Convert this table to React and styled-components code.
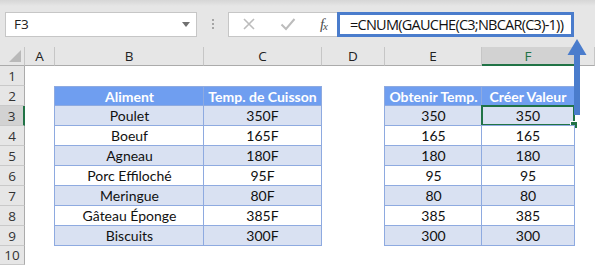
import React from 'react';
import styled, { createGlobalStyle } from 'styled-components';

const GlobalStyle = createGlobalStyle`
  html, body {
    margin: 0;
    padding: 0;
    background: #ffffff;
  }
  body {
    width: 595px;
    height: 265px;
    overflow: hidden;
  }
`;

const columns = [
  { key: 'A', width: 30 },
  { key: 'B', width: 149 },
  { key: 'C', width: 118 },
  { key: 'D', width: 63 },
  { key: 'E', width: 97 },
  { key: 'F', width: 93 },
  { key: 'G', width: 20 },
];

const foods = [
  ['Poulet', '350F', '350'],
  ['Boeuf', '165F', '165'],
  ['Agneau', '180F', '180'],
  ['Porc Effiloché', '95F', '95'],
  ['Meringue', '80F', '80'],
  ['Gâteau Éponge', '385F', '385'],
  ['Biscuits', '300F', '300'],
];

const App = () => {
  const rows = [];

  // row 1 is empty
  rows.push({ n: 1, cells: {} });
  rows.push({
    n: 2,
    cells: {
      B: { text: 'Aliment', kind: 'head', first: true },
      C: { text: 'Temp. de Cuisson', kind: 'head', last: true },
      E: { text: 'Obtenir Temp.', kind: 'head', first: true },
      F: { text: 'Créer Valeur', kind: 'head', last: true },
    },
  });
  foods.forEach(([name, temp, value], i) => {
    const kind = i % 2 === 0 ? 'band' : 'plain';
    rows.push({
      n: i + 3,
      cells: {
        B: { text: name, kind, first: true },
        C: { text: temp, kind, last: true },
        E: { text: value, kind, first: true },
        F: { text: value, kind, last: true, selected: i === 0 },
      },
    });
  });
  rows.push({ n: 10, cells: {} });

  return (
    <>
      <GlobalStyle />
      <Window>
        <Toolbar>
          <NameBox>
            <span>F3</span>
            <DropArrow />
          </NameBox>
          <Grip>
            <i /><i /><i />
          </Grip>
          <FormulaButtons>
            <svg width="14" height="14" viewBox="0 0 14 14">
              <path d="M2 2 L12 12 M12 2 L2 12" stroke="#bcbcbc" strokeWidth="1.6" fill="none" />
            </svg>
            <svg width="16" height="14" viewBox="0 0 16 14">
              <path d="M1.5 7.5 L6 12 L14.5 2" stroke="#bcbcbc" strokeWidth="2" fill="none" />
            </svg>
            <Fx>
              f<sub>x</sub>
            </Fx>
          </FormulaButtons>
          <FormulaInput>=CNUM(GAUCHE(C3;NBCAR(C3)-1))</FormulaInput>
        </Toolbar>

        <Sheet>
          <Corner />
          {columns.map(col => (
            <ColHeader key={col.key} active={col.key === 'F'}>
              {col.key === 'G' ? '' : col.key}
            </ColHeader>
          ))}

          {rows.map(row => (
            <React.Fragment key={row.n}>
              <RowHeader active={row.n === 3}>{row.n}</RowHeader>
              {columns.map(col => {
                const cell = row.cells[col.key];
                if (!cell) return <Blank key={col.key} />;
                return (
                  <Cell
                    key={col.key}
                    kind={cell.kind}
                    first={cell.first}
                    last={cell.last}
                    top={row.n === 2}
                  >
                    {cell.text}
                    {cell.selected && (
                      <Selection>
                        <FillHandle />
                      </Selection>
                    )}
                  </Cell>
                );
              })}
            </React.Fragment>
          ))}

          <Pointer width="22" height="78" viewBox="0 0 22 78">
            <path d="M10 0 L19.5 16 L13 16 L13 76 L7 76 L7 16 L0.5 16 Z" fill="#4a7ccc" />
          </Pointer>
        </Sheet>
      </Window>
    </>
  );
};

// Styled Components
const Window = styled.div`
  position: relative;
  width: 595px;
  height: 265px;
  overflow: hidden;
  background: #ffffff;
`;

const Toolbar = styled.div`
  display: flex;
  align-items: center;
  height: 47px;
  padding: 0 0 0 5px;
  box-sizing: border-box;
  background: linear-gradient(180deg, #d6d6d6 0px, #e6e6e6 6px, #e6e6e6 100%);
`;

const NameBox = styled.div`
  display: flex;
  align-items: center;
  justify-content: space-between;
  width: 192px;
  height: 25px;
  box-sizing: border-box;
  margin-top: 1px;
  padding: 0 6px 0 8px;
  background: #ffffff;
  border: 1px solid #c6c6c6;
  font-family: "Open Sans", "Liberation Sans", sans-serif;
  font-size: 13.5px;
  color: #222;
`;

const DropArrow = styled.span`
  width: 0;
  height: 0;
  border-left: 4px solid transparent;
  border-right: 4px solid transparent;
  border-top: 5px solid #707070;
`;

const Grip = styled.div`
  display: flex;
  flex-direction: column;
  gap: 2px;
  width: 31px;
  align-items: center;
  i {
    width: 2px;
    height: 2px;
    background: #a5a5a5;
  }
`;

const FormulaButtons = styled.div`
  display: flex;
  align-items: center;
  justify-content: space-between;
  width: 109px;
  height: 25px;
  box-sizing: border-box;
  margin-top: 1px;
  padding: 0 10px 0 13px;
  background: #ffffff;
  border: 1px solid #c6c6c6;
  border-right: none;
`;

const Fx = styled.span`
  font-family: "Liberation Serif", serif;
  font-style: italic;
  font-size: 15px;
  color: #4d4d4d;
  letter-spacing: -1px;
  sub {
    font-size: 11px;
    vertical-align: -1px;
  }
`;

const FormulaInput = styled.div`
  display: flex;
  align-items: center;
  width: 237px;
  height: 25px;
  box-sizing: border-box;
  margin-top: 2px;
  padding-left: 10px;
  background: #ffffff;
  border: 3px solid #4a7ccc;
  font-family: "Open Sans", "Liberation Sans", sans-serif;
  font-size: 14.5px;
  letter-spacing: -0.75px;
  color: #111;
  white-space: nowrap;
`;

const Sheet = styled.div`
  position: relative;
  display: grid;
  grid-template-columns: 25px 30px 149px 118px 63px 97px 93px 20px;
  grid-template-rows: 19px repeat(9, 20px);
  font-family: "Lato", "Liberation Sans", sans-serif;
`;

const headerFace = `
  display: flex;
  align-items: center;
  justify-content: center;
  font-family: "Open Sans", "Liberation Sans", sans-serif;
  font-size: 13.5px;
  box-sizing: border-box;
`;

const Corner = styled.div`
  position: relative;
  background: #e6e6e6;
  border-right: 1px solid #c6c6c6;
  border-bottom: 1px solid #ababab;
  &::after {
    content: '';
    position: absolute;
    right: 3px;
    bottom: 3px;
    border-left: 12px solid transparent;
    border-bottom: 12px solid #b9b9b9;
  }
`;

const ColHeader = styled.div`
  ${headerFace}
  background: ${props => (props.active ? '#d2d2d2' : '#e6e6e6')};
  color: ${props => (props.active ? '#217346' : '#222')};
  border-right: 1px solid #c6c6c6;
  border-bottom: ${props => (props.active ? '2px solid #217346' : '1px solid #ababab')};
  padding-top: ${props => (props.active ? '1px' : '0')};
`;

const RowHeader = styled.div`
  ${headerFace}
  background: ${props => (props.active ? '#d2d2d2' : '#e6e6e6')};
  color: #333;
  border-right: ${props => (props.active ? '2px solid #217346' : '1px solid #ababab')};
  border-bottom: 1px solid #c9c9c9;
`;

const Blank = styled.div`
  background: #ffffff;
`;

const cellFill = {
  head: '#6f9ef0',
  band: '#d9e1f2',
  plain: '#ffffff',
};

const Cell = styled.div`
  position: relative;
  display: flex;
  align-items: center;
  justify-content: center;
  box-sizing: border-box;
  margin-left: -1px;
  margin-top: ${props => (props.top ? '0' : '-1px')};
  height: ${props => (props.top ? '20px' : '21px')};
  background: ${props => cellFill[props.kind]};
  border: 1px solid #8eaae0;
  border-right: ${props => (props.last ? '1px solid #8eaae0' : 'none')};
  font-size: 14px;
  font-weight: ${props => (props.kind === 'head' ? 700 : 400)};
  color: ${props => (props.kind === 'head' ? '#ffffff' : '#111')};
  white-space: nowrap;
`;

const Selection = styled.div`
  position: absolute;
  left: -1px;
  top: -1px;
  right: -1px;
  bottom: -1px;
  border: 2px solid #217346;
`;

const FillHandle = styled.div`
  position: absolute;
  right: -5px;
  bottom: -5px;
  width: 6px;
  height: 6px;
  background: #217346;
  border: 1px solid #ffffff;
`;

const Pointer = styled.svg`
  position: absolute;
  left: 567px;
  top: -8px;
`;

export default App;
